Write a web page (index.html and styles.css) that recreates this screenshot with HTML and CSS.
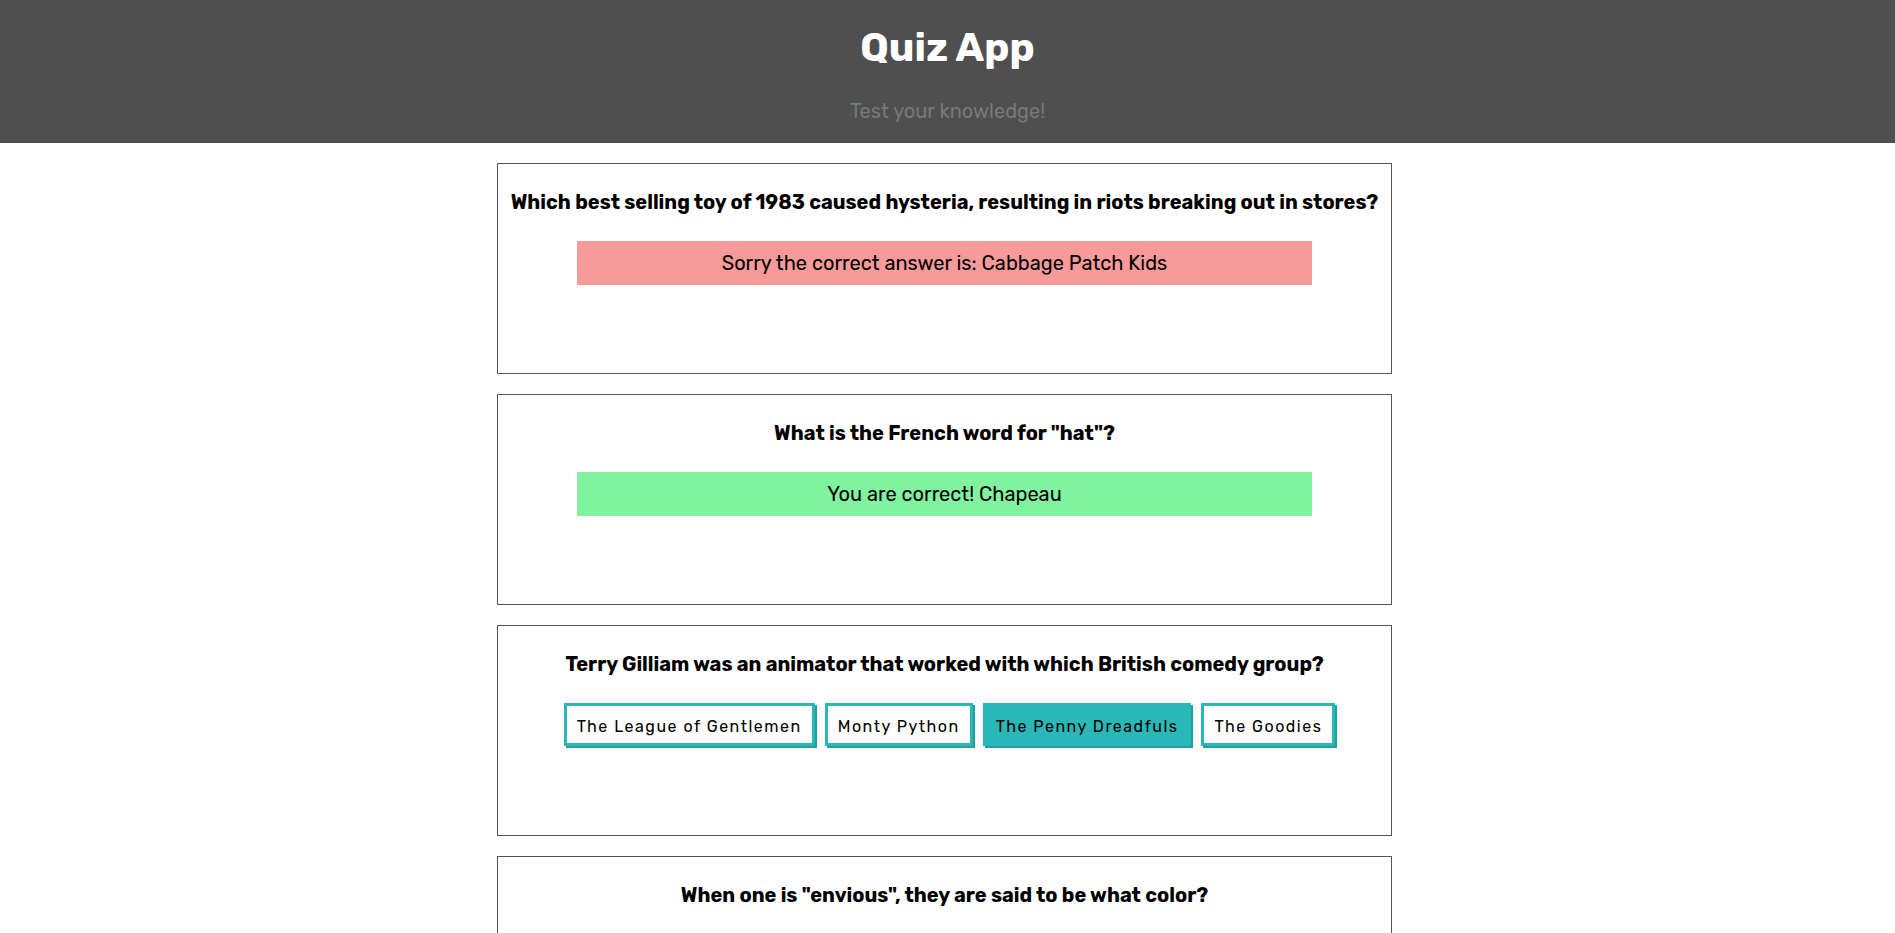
FILE: index.html
```html
<!DOCTYPE html>
<html lang="en">
<head>
<meta charset="utf-8">
<title>Quiz App</title>
<link rel="stylesheet" href="styles.css">
</head>
<body>
<header class="header">
  <h1 class="title">Quiz App</h1>
  <p class="subtitle">Test your knowledge!</p>
</header>
<main class="quiz">
  <section class="card">
    <h3 class="question">Which best selling toy of 1983 caused hysteria, resulting in riots breaking out in stores?</h3>
    <div class="feedback wrong">Sorry the correct answer is: Cabbage Patch Kids</div>
  </section>
  <section class="card">
    <h3 class="question">What is the French word for "hat"?</h3>
    <div class="feedback right">You are correct! Chapeau</div>
  </section>
  <section class="card">
    <h3 class="question">Terry Gilliam was an animator that worked with which British comedy group?</h3>
    <div class="answers">
      <button class="answer">The League of Gentlemen</button>
      <button class="answer">Monty Python</button>
      <button class="answer selected">The Penny Dreadfuls</button>
      <button class="answer">The Goodies</button>
    </div>
  </section>
  <section class="card">
    <h3 class="question">When one is "envious", they are said to be what color?</h3>
  </section>
</main>
</body>
</html>
```

FILE: styles.css
```css
html, body {
  margin: 0;
  padding: 0;
}
body {
  font-family: "Rubik", "Roboto", "Noto Sans", sans-serif;
  background: #ffffff;
  color: #000000;
}
.header {
  background: #4f4f4f;
  height: 143px;
  box-sizing: border-box;
  padding-top: 24px;
  text-align: center;
}
.title {
  margin: 0;
  font-size: 40px;
  line-height: 48px;
  font-weight: 700;
  color: #ffffff;
}
.subtitle {
  margin: 27px 0 0;
  font-size: 20px;
  line-height: 24px;
  color: #787878;
}
.quiz {
  display: flex;
  flex-direction: column;
  align-items: center;
  gap: 20px;
  padding: 20px 6px 0 0;
}
.card {
  width: 895px;
  height: 211px;
  box-sizing: border-box;
  border: 1px solid #555555;
  padding: 26px 6px 0;
  display: flex;
  flex-direction: column;
  align-items: center;
}
.question {
  margin: 0;
  font-size: 20px;
  line-height: 24px;
  font-weight: 700;
  text-align: center;
}
.feedback {
  margin-top: 27px;
  width: 735px;
  height: 44px;
  display: flex;
  align-items: center;
  justify-content: center;
  font-size: 20px;
}
.wrong {
  background: #f69a9a;
}
.right {
  background: #80f2a0;
}
.answers {
  margin-top: 27px;
  display: flex;
  gap: 10px;
  justify-content: center;
  padding-left: 10px;
}
.answer {
  font-family: inherit;
  font-size: 16px;
  letter-spacing: 1.5px;
  color: #000000;
  background: #ffffff;
  border: 3px solid #2ab7b7;
  box-shadow: 2px 2px 0 #259e9e;
  height: 43px;
  padding: 3px 10px 0;
  cursor: pointer;
}
.answer.selected {
  background: #2ab7b7;
}
```
